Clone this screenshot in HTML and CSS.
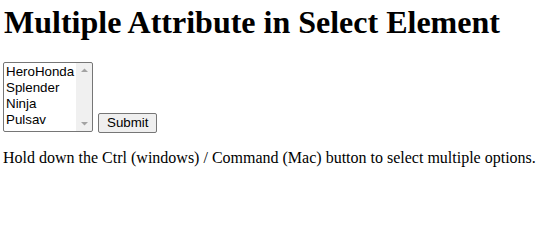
FILE: index.html
```html
<!DOCTYPE html>
<html>
<head>
<meta charset="utf-8">
<link rel="stylesheet" href="styles.css">
</head>
<body class="page">
<h1 class="title">Multiple Attribute in Select Element</h1>
<form class="form">
<select class="bikes" name="bikes" multiple>
<option value="herohonda">HeroHonda</option>
<option value="splender">Splender</option>
<option value="ninja">Ninja</option>
<option value="pulsav">Pulsav</option>
<option value="yamaha">Yamaha</option>
</select>
<input class="submit" type="submit" value="Submit">
</form>
<p class="hint">Hold down the Ctrl (windows) / Command (Mac) button to select multiple options.</p>
</body>
</html>
```
FILE: styles.css
```css
.page {
  font-family: "Liberation Serif", serif;
  margin: 4px 4px 4px 3px;
  color: #000;
  background: #fff;
}
.title {
  font-family: "Liberation Serif", serif;
  font-size: 32px;
  font-weight: bold;
  margin: 0 0 21px 1px;
}
.bikes, .submit {
  font-family: "Liberation Sans", Arial, sans-serif;
  font-size: 13.333px;
  color: #000;
}
.bikes {
  box-sizing: border-box;
  width: 90px;
  height: 70px;
  border: 1px solid #767676;
  border-radius: 2px;
  padding: 1px 17px 0 0;
  overflow: hidden;
  scrollbar-width: none;
  background-color: #fff;
  background-image:
    url("data:image/svg+xml;utf8,<svg xmlns='http://www.w3.org/2000/svg' width='17' height='17'><polygon points='5,10 12,10 8.5,6.5' fill='%23a3a3a3'/></svg>"),
    url("data:image/svg+xml;utf8,<svg xmlns='http://www.w3.org/2000/svg' width='17' height='17'><polygon points='5,7 12,7 8.5,10.5' fill='%23a3a3a3'/></svg>"),
    linear-gradient(to right, #f0f0f0, #f0f0f0);
  background-repeat: no-repeat;
  background-position: right top, right bottom, right top;
  background-size: 17px 17px, 17px 17px, 17px 100%;
  background-origin: border-box;
  background-clip: padding-box;
}
.bikes option {
  padding: 0 2px;
  line-height: 16px;
  height: 16px;
}
.submit {
  box-sizing: border-box;
  height: 20px;
  margin-left: 1px;
  background: #efefef;
  border: 1px solid #767676;
  border-radius: 2px;
  padding: 0 8px;
  line-height: 16px;
  vertical-align: 2px;
}
.hint {
  font-size: 16px;
  margin: 16px 0;
}
```
